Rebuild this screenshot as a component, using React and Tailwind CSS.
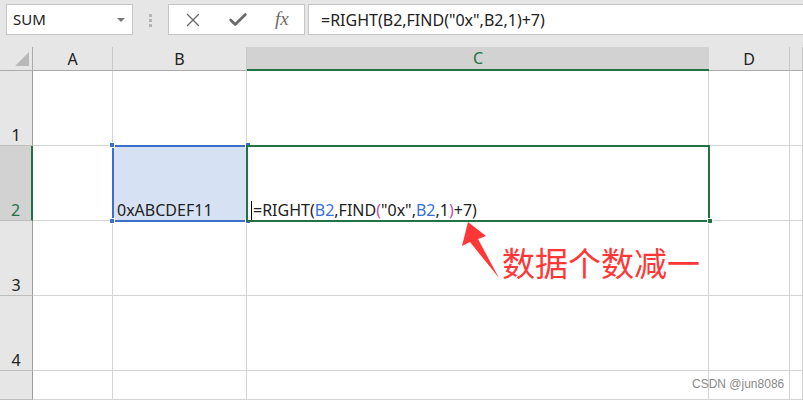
import { X, Check } from 'lucide-react';

const font = { fontFamily: '"Noto Sans", "Noto Sans CJK SC", sans-serif' };

function FormulaText() {
  return (
    <span>
      <span className="text-[#222]">=RIGHT(</span>
      <span className="text-[#3a6fd8]">B2</span>
      <span className="text-[#222]">,FIND</span>
      <span className="text-[#c0509b]">(</span>
      <span className="text-[#222]">"0x",</span>
      <span className="text-[#3a6fd8]">B2</span>
      <span className="text-[#222]">,1</span>
      <span className="text-[#c0509b]">)</span>
      <span className="text-[#222]">+7)</span>
    </span>
  );
}

function Handle({ className }) {
  return <div className={`absolute w-[6px] h-[6px] border border-white ${className}`} />;
}

export default function App() {
  const cols = ['A', 'B', 'C', 'D', ''];
  const rows = [1, 2, 3, 4, 5];

  return (
    <div className="w-[803px] h-[400px] overflow-hidden bg-[#e6e6e6] relative" style={font}>
      {/* toolbar */}
      <div className="h-[47px] flex items-start pt-[4px]">
        <div className="ml-[6px] w-[127px] h-[31px] bg-white border border-[#c6c6c6] flex items-center justify-between pl-[6px] pr-[7px]">
          <span className="text-[15px] text-[#222]">SUM</span>
          <div className="w-0 h-0 border-l-[4px] border-r-[4px] border-t-[4px] border-l-transparent border-r-transparent border-t-[#777]" />
        </div>
        <div className="ml-[16px] mt-[10px] flex flex-col gap-[2px]">
          <div className="w-[3px] h-[3px] bg-[#b4b4b4]" />
          <div className="w-[3px] h-[3px] bg-[#b4b4b4]" />
          <div className="w-[3px] h-[3px] bg-[#b4b4b4]" />
        </div>
        <div className="ml-[16px] w-[137px] h-[31px] bg-white border border-[#c6c6c6] flex items-center pl-[13px] gap-[23px] text-[#6b6b6b]">
          <X size={22} strokeWidth={1.5} />
          <Check size={22} strokeWidth={3} />
          <span className="text-[19px] italic ml-[3px]" style={{ fontFamily: '"Liberation Serif", serif' }}>fx</span>
        </div>
        <div className="ml-[3px] flex-1 h-[31px] bg-white border border-[#c6c6c6] border-r-0 flex items-center pl-[12px] text-[16px] text-[#222]">
          =RIGHT(B2,FIND("0x",B2,1)+7)
        </div>
      </div>

      {/* sheet */}
      <div className="grid grid-cols-[33px_80px_134px_462px_81px_1fr] grid-rows-[24px_75px_75px_75px_75px_1fr] h-[353px]">
        {/* corner */}
        <div className="bg-[#e6e6e6] border-r border-b border-[#ababab] relative">
          <div className="absolute right-[3px] bottom-[4px] w-0 h-0 border-t-[14px] border-t-transparent border-r-[14px] border-r-[#b9b9b9]" />
        </div>
        {cols.map((c) =>
          c === 'C' ? (
            <div key={c} className="bg-[#d2d2d2] border-b-2 border-[#217346] flex items-center justify-center text-[16px] text-[#217346]">
              C
            </div>
          ) : (
            <div key={c || 'x'} className="bg-[#e6e6e6] border-r border-r-[#c8c8c8] border-b border-b-[#ababab] flex items-center justify-center text-[16px] text-[#222]">
              {c}
            </div>
          )
        )}

        {rows.map((r) => (
          <div key={r} className="contents">
            {r === 2 ? (
              <div className="bg-[#d2d2d2] border-r-2 border-r-[#217346] border-b border-b-[#bdbdbd] flex items-end justify-center text-[16px] leading-[20px] text-[#217346]">
                2
              </div>
            ) : (
              <div className="bg-[#e6e6e6] border-r border-r-[#9e9e9e] border-b border-b-[#bdbdbd] flex items-end justify-center text-[16px] leading-[20px] text-[#222]">
                {r === 5 ? '' : r}
              </div>
            )}
            {cols.map((c) => {
              if (r === 2 && c === 'B') {
                return (
                  <div key={c} className="relative bg-[#d6e2f4] flex items-end pl-[4px] text-[16px] leading-[21px] text-[#222]">
                    <div className="absolute inset-[-1px] border-2 border-[#3b6fc9]" />
                    <Handle className="bg-[#3b6fc9] -left-[4px] -top-[4px]" />
                    <Handle className="bg-[#3b6fc9] -right-[4px] -top-[4px]" />
                    <Handle className="bg-[#3b6fc9] -left-[4px] -bottom-[3px]" />
                    <Handle className="bg-[#3b6fc9] -right-[4px] -bottom-[3px]" />
                    <span className="relative">0xABCDEF11</span>
                  </div>
                );
              }
              if (r === 2 && c === 'C') {
                return (
                  <div key={c} className="relative bg-white flex items-end pl-[4px] text-[16px] leading-[21px] whitespace-nowrap">
                    <div className="absolute -left-[1px] -top-[1px] -right-[1px] bottom-[-1px] border-2 border-[#217346]" />
                    <Handle className="bg-[#217346] -right-[4px] -bottom-[3px]" />
                    <div className="w-px h-[19px] bg-black mb-[1px] mr-[1px]" />
                    <FormulaText />
                  </div>
                );
              }
              return <div key={c || 'x'} className="bg-white border-r border-b border-[#d4d4d4]" />;
            })}
          </div>
        ))}
      </div>

      {/* annotation */}
      <svg className="absolute left-0 top-0 pointer-events-none" width="803" height="400">
        <polygon points="468,222 486,236 478,239 499,278 470,242 462,246" fill="#ff3737" />
      </svg>
      <div
        className="absolute left-[502px] top-[240px] text-[33px] leading-[44px] text-[#ff3737]"
        style={{ fontFamily: '"Noto Sans CJK SC", sans-serif' }}
      >
        数据个数减一
      </div>

      <div className="absolute left-[692px] top-[375px] text-[12px] text-[#8a8a8a]" style={{ fontFamily: '"Liberation Sans", sans-serif' }}>
        CSDN @jun8086
      </div>
    </div>
  );
}
